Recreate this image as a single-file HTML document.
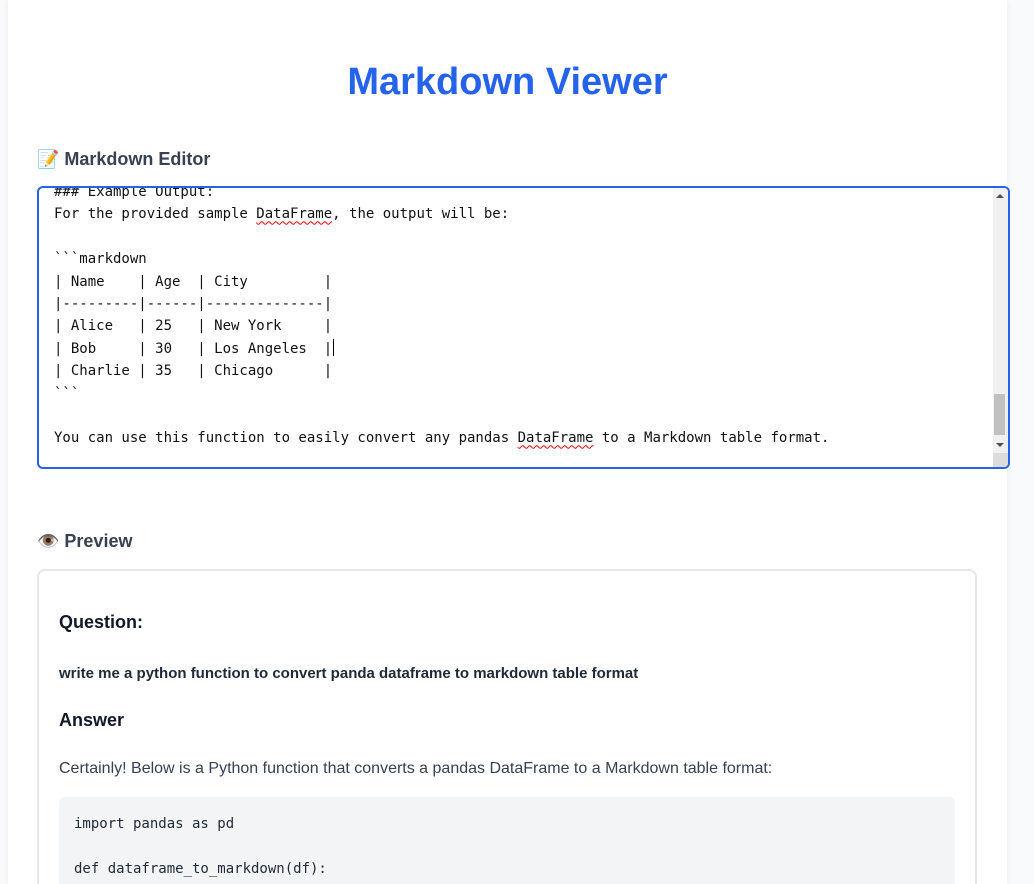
<!DOCTYPE html>
<html><head><meta charset="utf-8"><style>
*{box-sizing:border-box;margin:0;padding:0}
html,body{width:1034px;height:884px;overflow:hidden;background:#f9fafb;font-family:"Liberation Sans",Arial,sans-serif}
.wrap{position:absolute;left:8px;top:0;width:999px;height:884px;background:#fff;box-shadow:0 0 6px rgba(0,0,0,.06)}
h1{position:absolute;left:0;width:999px;top:57px;text-align:center;font-size:38px;font-weight:bold;color:#2563eb;line-height:50px}
.h2{position:absolute;left:29px;font-size:18px;font-weight:bold;color:#374151;line-height:24px}
.ta{position:absolute;left:37px;top:186px;width:973px;height:283px;border:2px solid #2563eb;border-radius:6px;overflow:hidden;background:#fff}
.code{position:absolute;left:15px;top:-7px;font-family:"DejaVu Sans Mono","Liberation Mono",monospace;font-size:14px;line-height:22.4px;color:#111;white-space:pre}
.sq{text-decoration:underline wavy #e00;text-decoration-thickness:1px;text-underline-offset:2px}
.caret{display:inline-block;width:1px;height:17px;background:#000;vertical-align:-3px;margin-left:1px}
.sb{position:absolute;right:0;top:0;width:15px;height:279px;background:#f0f0f0}
.thumb{position:absolute;left:1px;top:206px;width:11px;height:41px;background:#c1c1c1}
.pv{position:absolute;left:37px;top:569px;width:940px;height:315px;border:2px solid #e5e7eb;border-bottom:none;border-radius:8px 8px 0 0;background:#fff;overflow:hidden}
.q{position:absolute;left:20px;font-weight:bold;color:#111827;white-space:nowrap}
.cb{position:absolute;left:20px;top:226px;width:896px;height:120px;background:#f3f4f6;border-radius:6px}
.cb pre{position:absolute;left:15px;top:16px;font-family:"DejaVu Sans Mono","Liberation Mono",monospace;font-size:14px;line-height:22.7px;color:#1f2937}
</style></head><body>
<div class="wrap">
<h1>Markdown Viewer</h1>
<div class="h2" style="top:147px">📝 Markdown Editor</div>
<div class="h2" style="top:529px">👁️ Preview</div>
</div>
<div class="ta">
<div class="code">### Example Output:
For the provided sample <span class="sq">DataFrame</span>, the output will be:

&#96;&#96;&#96;markdown
| Name    | Age  | City         |
|---------|------|--------------|
| Alice   | 25   | New York     |
| Bob     | 30   | Los Angeles  |<span class="caret"></span>
| Charlie | 35   | Chicago      |
&#96;&#96;&#96;

You can use this function to easily convert any pandas <span class="sq">DataFrame</span> to a Markdown table format.</div>
<div class="sb">
<div style="position:absolute;left:3px;top:6px;width:0;height:0;border-left:4px solid transparent;border-right:4px solid transparent;border-bottom:4px solid #505050"></div>
<div class="thumb"></div>
<div style="position:absolute;left:3px;top:255px;width:0;height:0;border-left:4px solid transparent;border-right:4px solid transparent;border-top:4px solid #505050"></div>
<div style="position:absolute;left:0;top:265px;width:15px;height:14px;background:#dcdcdc"></div>
</div>
</div>
<div class="pv">
<div class="q" style="top:39px;font-size:18px;line-height:24px">Question:</div>
<div class="q" style="top:93px;font-size:15px;line-height:20px;color:#1f2937">write me a python function to convert panda dataframe to markdown table format</div>
<div class="q" style="top:137px;font-size:18px;line-height:24px">Answer</div>
<div style="position:absolute;left:20px;top:187px;font-size:16px;line-height:22px;color:#374151;white-space:nowrap">Certainly! Below is a Python function that converts a pandas DataFrame to a Markdown table format:</div>
<div class="cb"><pre>import pandas as pd

def dataframe_to_markdown(df):</pre></div>
</div>
</body></html>
